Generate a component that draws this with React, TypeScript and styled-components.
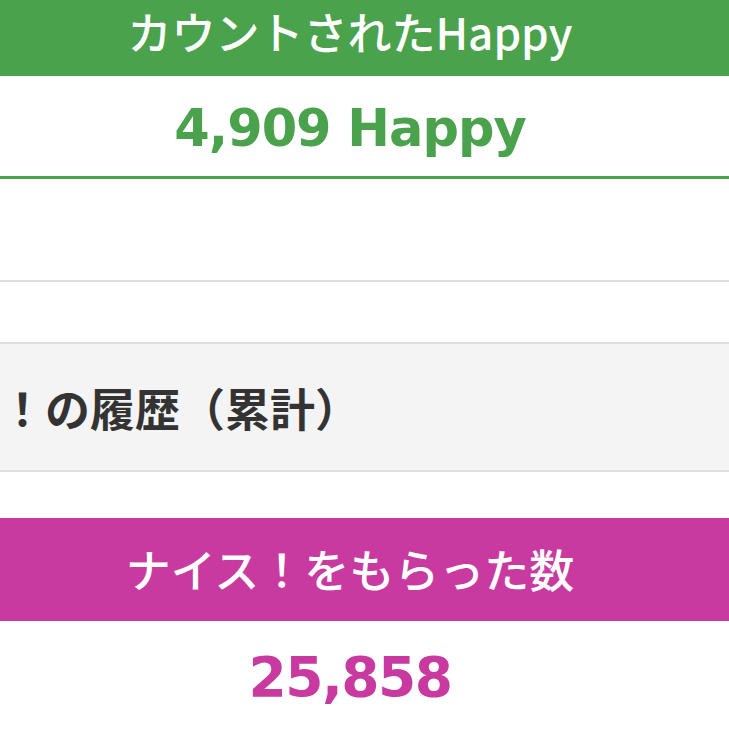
import React from 'react'
import styled, { createGlobalStyle } from 'styled-components'

const GlobalStyle = createGlobalStyle`
  html, body {
    margin: 0;
    padding: 0;
    background: #fff;
    overflow: hidden;
  }
  body {
    font-family: "Liberation Sans", "Noto Sans CJK JP", sans-serif;
  }
`;

const GREEN = '#4aa24c';
const PINK = '#c93aa1';

export default function App() {
    return (
        <Page>
            <GlobalStyle />

            {/* Happyカウント */}
            <HeadBar color={GREEN} height={76} lift={14}>
                <HeadText size={44}>カウントされたHappy</HeadText>
            </HeadBar>
            <ValueRow height={100} line={GREEN}>
                <ValueText color={GREEN} size={51} spacing={-1}>4,909 Happy</ValueText>
            </ValueRow>

            <EmptyRow />

            {/* 履歴 */}
            <SectionTitle>
                <SectionText>！の履歴（累計）</SectionText>
            </SectionTitle>

            {/* ナイス数 */}
            <HeadBar color={PINK} height={103} lift={2}>
                <HeadText size={45}>ナイス！をもらった数</HeadText>
            </HeadBar>
            <ValueRow height={108}>
                <ValueText color={PINK} size={55} spacing={-1.5}>25,858</ValueText>
            </ValueRow>
        </Page>
    )
}

const Page = styled.div`
    width: 729px;
    height: 729px;
    display: flex;
    flex-direction: column;
`;

const HeadBar = styled.div<{ color: string; height: number; lift: number }>`
    flex: none;
    height: ${({ height }) => height}px;
    background-color: ${({ color }) => color};
    display: flex;
    align-items: center;
    justify-content: center;
    padding: 0 29px ${({ lift }) => lift}px 0;
    box-sizing: border-box;
`;

const HeadText = styled.h2<{ size: number }>`
    margin: 0;
    color: #fff;
    font-family: "Noto Sans CJK JP", "Liberation Sans", sans-serif;
    font-weight: 500;
    font-size: ${({ size }) => size}px;
    line-height: 1;
    white-space: nowrap;
`;

const ValueRow = styled.div<{ height: number; line?: string }>`
    flex: none;
    height: ${({ height }) => height}px;
    display: flex;
    align-items: center;
    justify-content: center;
    padding-right: 29px;
    border-bottom: ${({ line }) => (line ? `3px solid ${line}` : 'none')};
`;

const ValueText = styled.p<{ color: string; size: number; spacing: number }>`
    margin: 0;
    color: ${({ color }) => color};
    font-family: "DejaVu Sans", "Liberation Sans", sans-serif;
    font-weight: 700;
    font-size: ${({ size }) => size}px;
    letter-spacing: ${({ spacing }) => spacing}px;
    line-height: 1;
    padding-top: 4px;
`;

const EmptyRow = styled.div`
    flex: none;
    height: 101px;
    border-bottom: 2px solid #dedede;
    margin-bottom: 60px;
`;

const SectionTitle = styled.div`
    flex: none;
    height: 130px;
    box-sizing: border-box;
    background-color: #f4f4f4;
    border-top: 2px solid #dedede;
    border-bottom: 2px solid #dedede;
    margin-bottom: 46px;
    display: flex;
    align-items: center;
    overflow: hidden;
`;

const SectionText = styled.h3`
    margin: 0;
    color: #333;
    font-family: "Noto Sans CJK JP", sans-serif;
    font-weight: 700;
    font-size: 45px;
    line-height: 1;
    white-space: nowrap;
`;
